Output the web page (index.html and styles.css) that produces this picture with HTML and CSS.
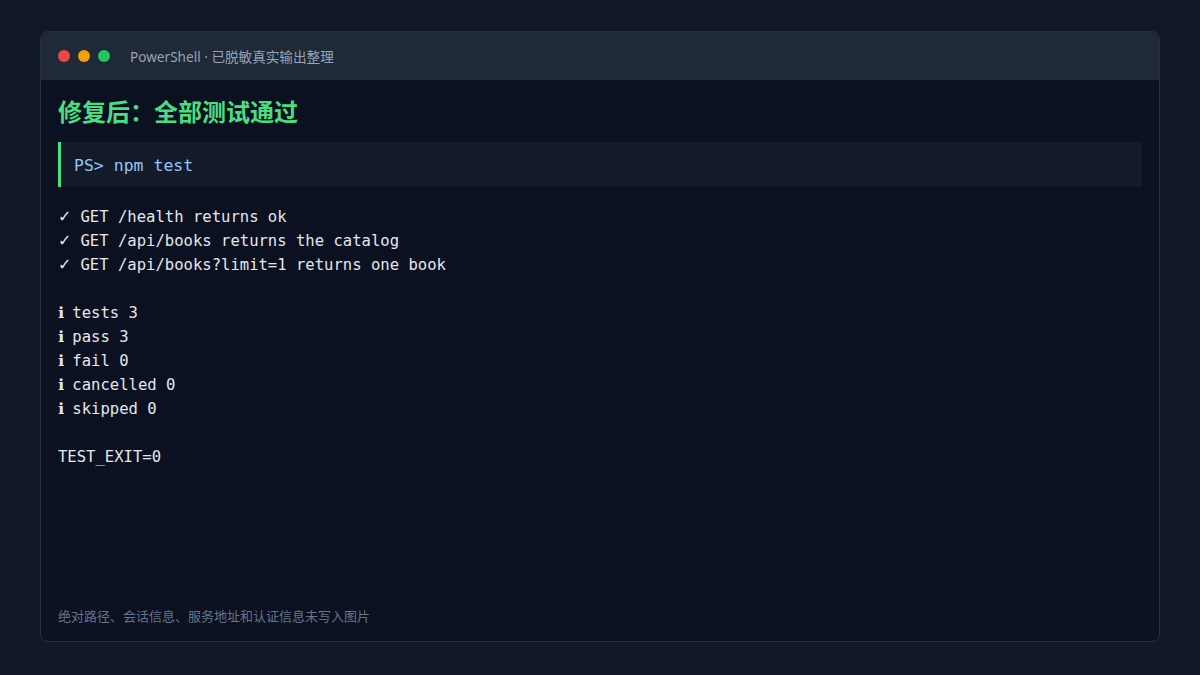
FILE: index.html
```html
<!DOCTYPE html>
<html lang="zh-CN">
<head>
<meta charset="utf-8">
<link rel="stylesheet" href="styles.css">
</head>
<body>
<div class="window">
  <div class="titlebar">
    <span class="dot red"></span>
    <span class="dot amber"></span>
    <span class="dot green"></span>
    <span class="title">PowerShell · 已脱敏真实输出整理</span>
  </div>
  <div class="content">
    <h1 class="heading">修复后：全部测试通过</h1>
    <div class="command">PS&gt; npm test</div>
    <pre class="output"><span class="ok">✓</span> GET /health returns ok
<span class="ok">✓</span> GET /api/books returns the catalog
<span class="ok">✓</span> GET /api/books?limit=1 returns one book

<span class="info">ℹ</span> tests 3
<span class="info">ℹ</span> pass 3
<span class="info">ℹ</span> fail 0
<span class="info">ℹ</span> cancelled 0
<span class="info">ℹ</span> skipped 0

TEST_EXIT=0</pre>
    <div class="footer">绝对路径、会话信息、服务地址和认证信息未写入图片</div>
  </div>
</div>
</body>
</html>
```
FILE: styles.css
```css
html, body {
  margin: 0;
  padding: 0;
  background: #111827;
}
body {
  width: 1200px;
  height: 675px;
  padding: 31px 40px 0;
  box-sizing: border-box;
  font-family: "Noto Sans", "Noto Sans CJK SC", sans-serif;
}
.window {
  height: 611px;
  box-sizing: border-box;
  border: 1px solid #253041;
  border-radius: 8px;
  background: #0b1120;
  display: flex;
  flex-direction: column;
  overflow: hidden;
}
.titlebar {
  height: 48px;
  flex: none;
  background: #1f2937;
  display: flex;
  align-items: center;
  padding-left: 17px;
}
.dot {
  width: 12px;
  height: 12px;
  border-radius: 50%;
  margin-right: 8px;
}
.red { background: #ef4444; }
.amber { background: #f59e0b; }
.green { background: #22c55e; }
.title {
  margin-left: 12px;
  font-size: 13.6px;
  color: #94a3b8;
  font-family: "Noto Sans", "Noto Sans CJK SC", sans-serif;
}
.content {
  flex: 1;
  display: flex;
  flex-direction: column;
  padding: 14px 17px 16px;
}
.heading {
  margin: 0;
  font-size: 24px;
  line-height: 34px;
  font-weight: 700;
  color: #4ade80;
  font-family: "Noto Sans CJK SC", sans-serif;
}
.command {
  margin-top: 14px;
  height: 45px;
  box-sizing: border-box;
  border-left: 3px solid #4ade80;
  background: #131a28;
  padding-left: 13px;
  padding-top: 2px;
  display: flex;
  align-items: center;
  font-family: "DejaVu Sans Mono", monospace;
  font-size: 16.5px;
  color: #93c5fd;
}
.output {
  margin: 18px 0 0;
  font-family: "DejaVu Sans Mono", monospace;
  font-size: 15.57px;
  line-height: 24px;
  color: #e5e7eb;
  flex: 1;
}
.ok {
  font-family: "DejaVu Sans", sans-serif;
  font-weight: 700;
  font-size: 16px;
  letter-spacing: -0.3px;
}
.info {
  font-family: "DejaVu Sans", sans-serif;
  font-weight: 700;
  letter-spacing: -1px;
}
.footer {
  font-size: 13px;
  color: #64748b;
  font-family: "Noto Sans CJK SC", sans-serif;
}
```
